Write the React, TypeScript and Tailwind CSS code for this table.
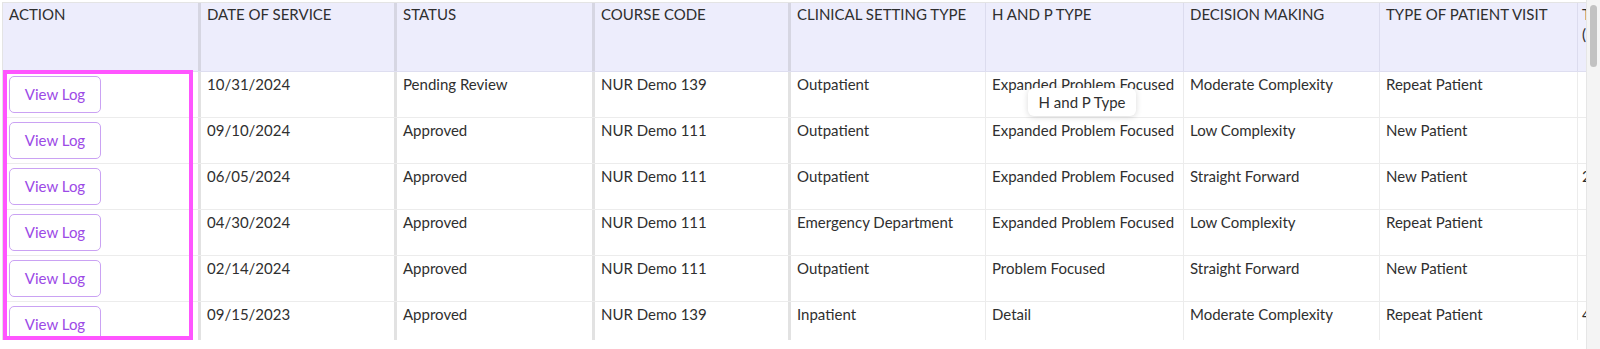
const columns = [
  { label: "ACTION", w: "w-[195px]", sep: "", pad: "px-[6px]" },
  { label: "DATE OF SERVICE", w: "w-[196px]", sep: "thick", pad: "px-[6px]" },
  { label: "STATUS", w: "w-[198px]", sep: "thick", pad: "px-[6px]" },
  { label: "COURSE CODE", w: "w-[196px]", sep: "thick", pad: "px-[6px]" },
  { label: "CLINICAL SETTING TYPE", w: "w-[197px]", sep: "thick", pad: "px-[6px]" },
  { label: "H AND P TYPE", w: "w-[198px]", sep: "thin", pad: "px-[6px]" },
  { label: "DECISION MAKING", w: "w-[196px]", sep: "thin", pad: "px-[6px]" },
  { label: "TYPE OF PATIENT VISIT", w: "w-[198px]", sep: "thin", pad: "px-[6px]" },
  { label: "TIME SPENT (MINUTES)", w: "w-[200px]", sep: "thin", pad: "px-[4px]" },
];

const rows = [
  ["10/31/2024", "Pending Review", "NUR Demo 139", "Outpatient", "Expanded Problem Focused", "Moderate Complexity", "Repeat Patient", ""],
  ["09/10/2024", "Approved", "NUR Demo 111", "Outpatient", "Expanded Problem Focused", "Low Complexity", "New Patient", ""],
  ["06/05/2024", "Approved", "NUR Demo 111", "Outpatient", "Expanded Problem Focused", "Straight Forward", "New Patient", "20"],
  ["04/30/2024", "Approved", "NUR Demo 111", "Emergency Department", "Expanded Problem Focused", "Low Complexity", "Repeat Patient", ""],
  ["02/14/2024", "Approved", "NUR Demo 111", "Outpatient", "Problem Focused", "Straight Forward", "New Patient", ""],
  ["09/15/2023", "Approved", "NUR Demo 139", "Inpatient", "Detail", "Moderate Complexity", "Repeat Patient", "45"],
];

function sepClass(sep: string, header: boolean) {
  if (sep === "thick") return header ? "border-l-[3px] border-[#d6d6e2]" : "border-l-[3px] border-[#e2e2e2]";
  if (sep === "thin") return header ? "border-l border-[#dcdcee]" : "border-l border-[#ececec]";
  return "";
}

export default function App() {
  return (
    <div className="flex h-[349px] w-[1600px] bg-white font-['Lato','Noto_Sans',sans-serif] text-[#2f2f2f]">
      <div className="relative flex-1 overflow-hidden">
        <div className="ml-[2px] mt-[2px] h-[338px] overflow-hidden border-l border-t border-[#e4e4e4] bg-white">
          {/* header */}
          <div className="flex h-[69px] border-b border-[#dedef0] bg-[#ededfc]">
            {columns.map((c) => (
              <div
                key={c.label}
                className={`${c.w} ${c.pad} shrink-0 overflow-hidden pt-[1px] text-[15px] leading-[20px] ${sepClass(c.sep, true)}`}
              >
                {c.label === "TIME SPENT (MINUTES)" ? (
                  <>
                    <div className="whitespace-nowrap">TIME SPENT</div>
                    <div className="whitespace-nowrap">(MINUTES)</div>
                  </>
                ) : (
                  c.label
                )}
              </div>
            ))}
          </div>
          {/* body */}
          {rows.map((r, i) => (
            <div key={i} className="flex h-[46px] border-b border-[#ececec]">
              <div className="w-[195px] shrink-0 pl-[6px] pt-[4px]">
                <button className="flex h-[37px] w-[92px] items-center justify-center rounded-[5px] border border-[#caa2f3] bg-white text-[15px] text-[#9c4ae6]">
                  View Log
                </button>
              </div>
              {r.map((v, j) => (
                <div
                  key={j}
                  className={`${columns[j + 1].w} ${columns[j + 1].pad} shrink-0 overflow-hidden whitespace-nowrap pt-[2px] text-[15px] leading-[20px] ${sepClass(columns[j + 1].sep, false)}`}
                >
                  {v}
                </div>
              ))}
            </div>
          ))}
        </div>

        {/* highlight around the action column */}
        <div className="pointer-events-none absolute left-[3px] top-[70px] h-[270px] w-[190px] border-4 border-[#ff55ff]" />

        {/* tooltip */}
        <div className="absolute left-[1028px] top-[88px] flex h-[28px] w-[108px] items-center justify-center rounded-md bg-white text-[15px] text-[#2f2f2f] shadow-[0_1px_6px_rgba(0,0,0,0.15)]">
          H and P Type
        </div>
      </div>

      {/* scrollbar */}
      <div className="flex w-[14px] shrink-0 justify-center border-l border-[#e6e6e6] bg-[#f4f4f4] pt-[5px]">
        <div className="h-[62px] w-[7px] rounded-full bg-[#c2c2c2]" />
      </div>
    </div>
  );
}
